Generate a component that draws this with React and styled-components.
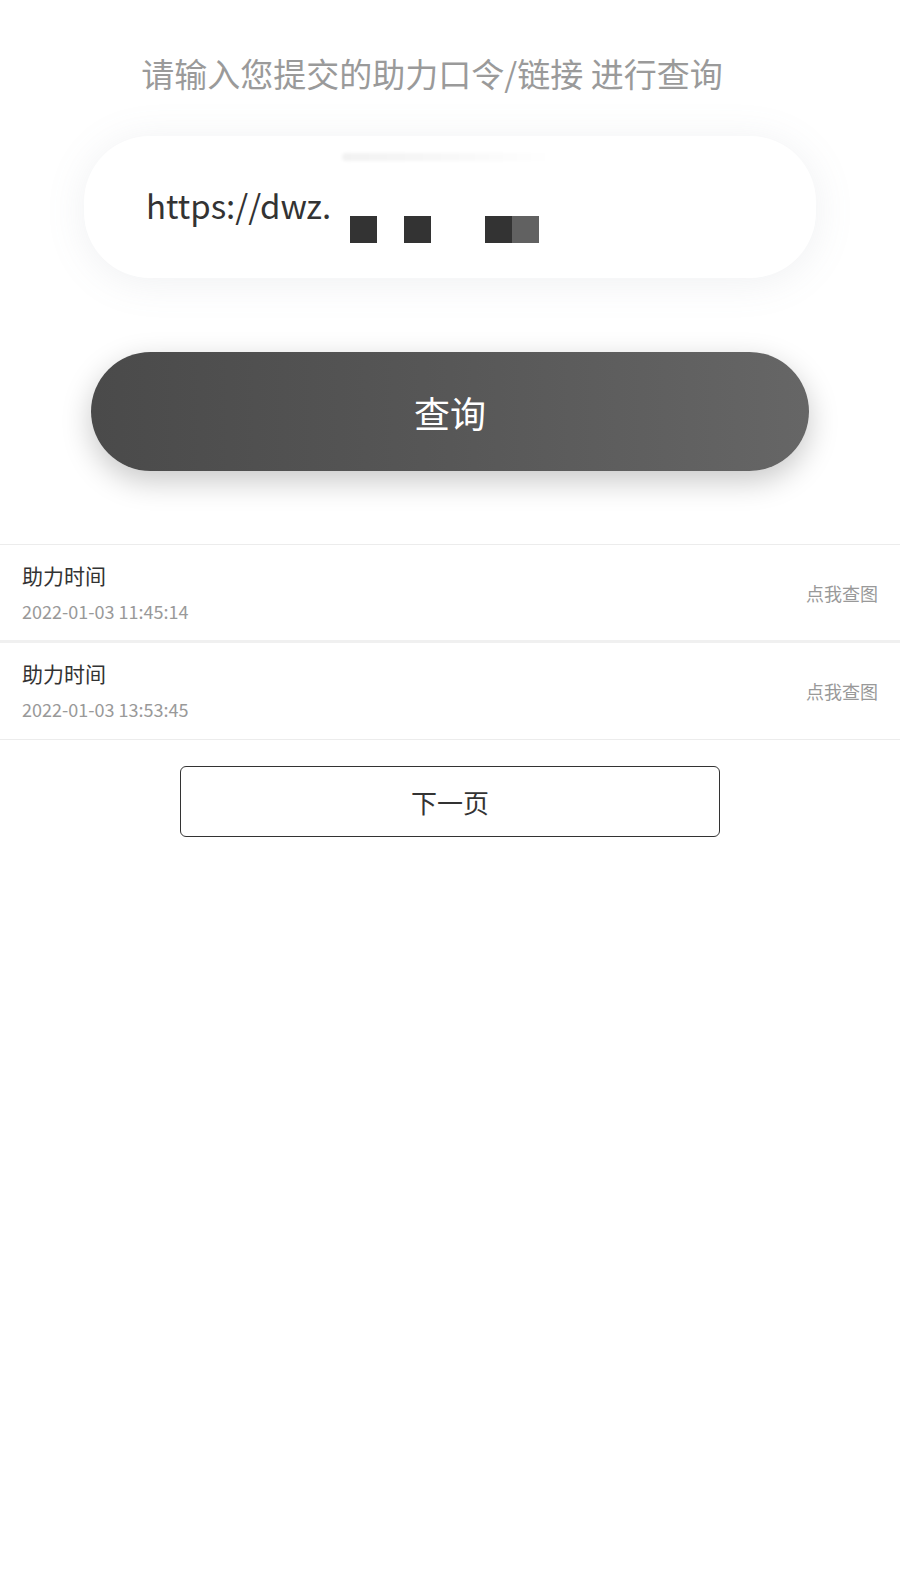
import React from "react";
import styled, { createGlobalStyle } from "styled-components";

const Global = createGlobalStyle`
  html, body { margin: 0; padding: 0; background: #ffffff; }
  body { font-family: "Noto Sans CJK SC", "Noto Sans", sans-serif; }
  * { box-sizing: border-box; }
`;

const Page = styled.div`
  width: 900px;
  min-height: 1572px;
  background: #fff;
  display: flex;
  flex-direction: column;
  align-items: center;
  padding-top: 52px;
`;

const Prompt = styled.div`
  font-size: 33px;
  line-height: 43px;
  color: #9a9a9a;
  white-space: pre;
  margin-right: 36px;
`;

const InputCard = styled.div`
  position: relative;
  margin-top: 41px;
  width: 732px;
  height: 142px;
  border-radius: 66px;
  background: #fff;
  box-shadow: 0 4px 40px rgba(120, 130, 150, 0.12);
  display: flex;
  align-items: center;
  padding-left: 62px;
`;

const Smudge = styled.span`
  position: absolute;
  left: 258px;
  top: 17px;
  width: 210px;
  height: 8px;
  border-radius: 8px 2px 2px 8px;
  background: linear-gradient(90deg, rgba(0,0,0,0.05), rgba(0,0,0,0.025) 60%, rgba(0,0,0,0));
  filter: blur(1.5px);
`;

const InputText = styled.span`
  font-size: 33px;
  color: #333;
  line-height: 1;
  position: relative;
  top: -2px;
`;

const Mask = styled.div`
  display: flex;
  align-items: center;
  margin-left: 19px;
  gap: 27px;
  position: relative;
  top: 22px;
`;

const Block = styled.span`
  width: 27px;
  height: 27px;
  display: block;
  background: ${(p) => p.$bg || "#333"};
`;

const Pair = styled.span`
  display: flex;
  margin-left: 27px;
`;

const QueryButton = styled.button`
  margin-top: 74px;
  width: 718px;
  height: 119px;
  border: none;
  border-radius: 60px;
  background: linear-gradient(90deg, #4a4a4a 0%, #575757 50%, #666666 100%);
  box-shadow: 0 10px 30px rgba(0, 0, 0, 0.22);
  color: #fff;
  font-family: "Noto Sans CJK SC", sans-serif;
  font-size: 36px;
`;

const List = styled.div`
  margin-top: 73px;
  width: 100%;
  border-top: 1px solid #ececec;
`;

const Row = styled.div`
  display: flex;
  align-items: center;
  justify-content: space-between;
  height: ${(p) => p.$h}px;
  padding: 0 22px;
  border-bottom: ${(p) => (p.$thick ? "3px solid #f0f0f0" : "1px solid #ececec")};
`;

const Info = styled.div`
  display: flex;
  flex-direction: column;
  gap: 9px;
  margin-top: -1px;
`;

const RowTitle = styled.div`
  font-size: 21px;
  line-height: 28px;
  color: #333;
`;

const RowDate = styled.div`
  font-size: 18px;
  line-height: 26px;
  color: #999;
`;

const Link = styled.div`
  font-size: 18px;
  color: #999;
`;

const NextButton = styled.button`
  margin-top: 26px;
  width: 540px;
  height: 71px;
  border: 1.5px solid #333;
  border-radius: 6px;
  background: #fff;
  color: #333;
  font-family: "Noto Sans CJK SC", sans-serif;
  font-size: 26px;
`;

const records = [
  { time: "2022-01-03 11:45:14", h: 98, thick: true },
  { time: "2022-01-03 13:53:45", h: 97, thick: false },
];

export default function App() {
  return (
    <>
      <Global />
      <Page>
        <Prompt>请输入您提交的助力口令/链接 进行查询</Prompt>
        <InputCard>
          <Smudge />
          <InputText>https://dwz.</InputText>
          <Mask>
            <Block />
            <Block />
            <Pair>
              <Block />
              <Block $bg="#616161" />
            </Pair>
          </Mask>
        </InputCard>
        <QueryButton>查询</QueryButton>
        <List>
          {records.map((r) => (
            <Row key={r.time} $h={r.h} $thick={r.thick}>
              <Info>
                <RowTitle>助力时间</RowTitle>
                <RowDate>{r.time}</RowDate>
              </Info>
              <Link>点我查图</Link>
            </Row>
          ))}
        </List>
        <NextButton>下一页</NextButton>
      </Page>
    </>
  );
}
